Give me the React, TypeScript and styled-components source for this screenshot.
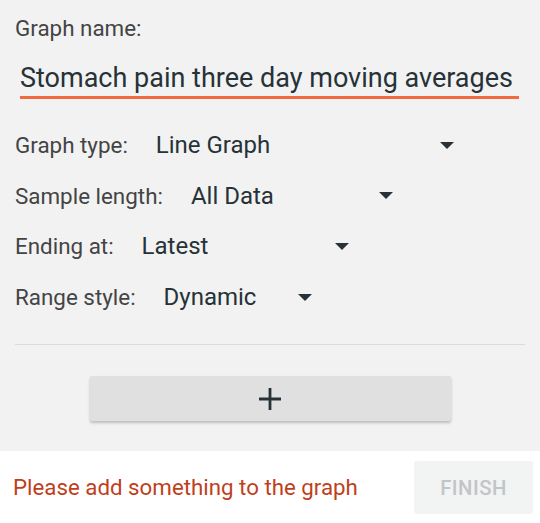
import React from "react";
import styled, { createGlobalStyle } from "styled-components";

const Global = createGlobalStyle`
  html, body { margin: 0; padding: 0; background: #ffffff; }
  body { font-family: Roboto, "Noto Sans", "Liberation Sans", sans-serif; }
`;

const Page = styled.div`
  width: 540px;
  height: 523px;
  display: flex;
  flex-direction: column;
  background: #ffffff;
`;

const Panel = styled.div`
  background: #f2f2f2;
  height: 451px;
  box-sizing: border-box;
  padding: 14px 15px 0 15px;
  display: flex;
  flex-direction: column;
`;

const NameLabel = styled.div`
  font-size: 22.4px;
  line-height: 28px;
  color: #444444;
`;

const NameInput = styled.div`
  margin: 19px 6px 0 5px;
  padding-bottom: 1px;
  border-bottom: 3px solid #f26a40;
  font-size: 27px;
  line-height: 34px;
  color: #263238;
  white-space: nowrap;
`;

const Rows = styled.div`
  margin-top: 31px;
  display: flex;
  flex-direction: column;
  gap: 20.7px;
`;

const Row = styled.div`
  display: flex;
  align-items: center;
  height: 30px;
`;

const RowLabel = styled.span`
  font-size: 22.4px;
  color: #444444;
`;

const Select = styled.div<{ $width: number }>`
  margin-left: 28px;
  width: ${(p) => p.$width}px;
  display: flex;
  align-items: center;
  justify-content: space-between;
  font-size: 24px;
  color: #263238;
`;

const Caret = styled.span`
  width: 0;
  height: 0;
  border-left: 7px solid transparent;
  border-right: 7px solid transparent;
  border-top: 7px solid #263238;
  margin-right: 2px;
`;

const Divider = styled.div`
  margin-top: 32px;
  height: 1px;
  background: #dcdcdc;
`;

const AddButton = styled.button`
  align-self: center;
  margin-top: 31px;
  width: 361px;
  height: 45px;
  border: none;
  border-radius: 2px;
  background: #e0e0e0;
  box-shadow: 0 2px 3px rgba(0, 0, 0, 0.22);
  display: flex;
  align-items: center;
  justify-content: center;
  padding: 0;
`;

const Footer = styled.div`
  flex: 1;
  display: flex;
  align-items: center;
  justify-content: space-between;
  padding: 0 7px 0 13px;
`;

const ErrorText = styled.span`
  font-size: 22.3px;
  color: #bf3f1c;
`;

const FinishButton = styled.button`
  width: 119px;
  height: 53px;
  border: none;
  border-radius: 3px;
  background: #f2f3f3;
  color: #c1c5c8;
  font-family: Roboto, "Noto Sans", sans-serif;
  font-size: 20.3px;
  font-weight: 500;
  letter-spacing: 0.5px;
  margin-top: 1px;
`;

const rows = [
  { label: "Graph type:", value: "Line Graph", width: 300 },
  { label: "Sample length:", value: "All Data", width: 204 },
  { label: "Ending at:", value: "Latest", width: 209 },
  { label: "Range style:", value: "Dynamic", width: 150 },
];

export default function App() {
  return (
    <Page>
      <Global />
      <Panel>
        <NameLabel>Graph name:</NameLabel>
        <NameInput>Stomach pain three day moving averages</NameInput>
        <Rows>
          {rows.map((r) => (
            <Row key={r.label}>
              <RowLabel>{r.label}</RowLabel>
              <Select $width={r.width}>
                <span>{r.value}</span>
                <Caret />
              </Select>
            </Row>
          ))}
        </Rows>
        <Divider />
        <AddButton aria-label="add">
          <svg width="22" height="22" viewBox="0 0 22 22">
            <path d="M11 0v22M0 11h22" stroke="#263238" strokeWidth="2.8" fill="none" />
          </svg>
        </AddButton>
      </Panel>
      <Footer>
        <ErrorText>Please add something to the graph</ErrorText>
        <FinishButton>FINISH</FinishButton>
      </Footer>
    </Page>
  );
}
